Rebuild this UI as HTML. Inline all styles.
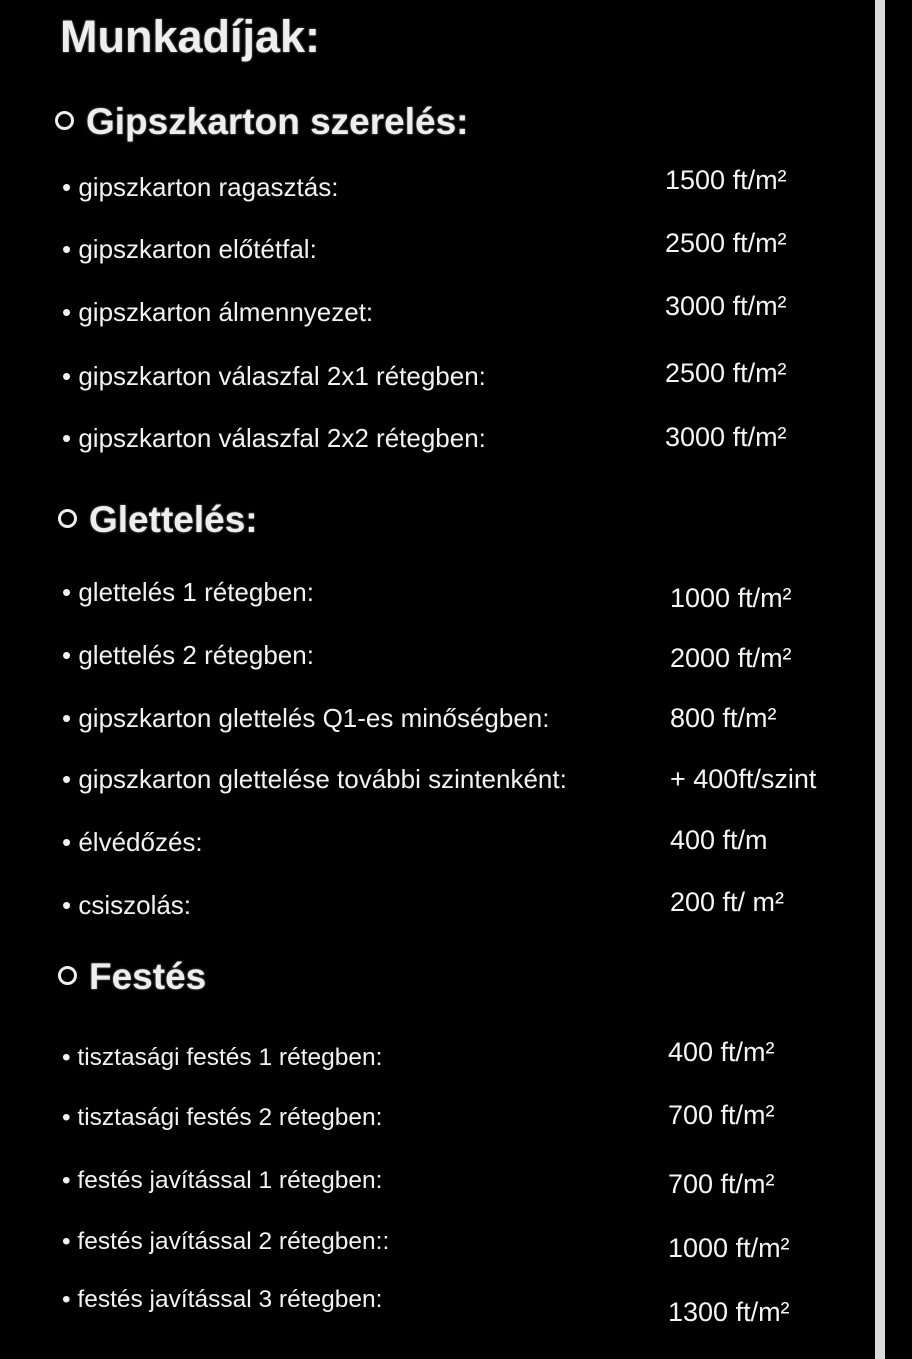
<!DOCTYPE html>
<html><head><meta charset="utf-8"><style>
body{margin:0;width:912px;height:1359px;background:#000;position:relative;overflow:hidden;font-family:"Liberation Sans",sans-serif;color:#fff}
.bar{position:absolute;left:875px;top:0;width:10px;height:1359px;background:#dcdcdc}
.t{position:absolute;white-space:nowrap;line-height:30px}
.i{font-size:26px;color:#f2f2f2;left:62px}
.p{font-size:27px;color:#f5f5f5}
.h{font-size:37px;font-weight:bold;color:#eee;line-height:44px;text-shadow:0 0 2px #888}
.h .c{display:inline-block;width:13px;height:13px;border:3px solid #eee;border-radius:50%;margin-right:12px;vertical-align:4px}
</style></head><body>
<div class="bar"></div>
<div class="t h" style="left:60px;top:15px;font-size:45px">Munkadíjak:</div>
<div class="t h" style="left:55px;top:100px"><span class="c"></span>Gipszkarton szerelés:</div>
<div class="t i" style="top:172px">• gipszkarton ragasztás:</div>
<div class="t i" style="top:234px">• gipszkarton előtétfal:</div>
<div class="t i" style="top:297px">• gipszkarton álmennyezet:</div>
<div class="t i" style="top:361px">• gipszkarton válaszfal 2x1 rétegben:</div>
<div class="t i" style="top:423px">• gipszkarton válaszfal 2x2 rétegben:</div>
<div class="t p" style="left:665px;top:165px">1500 ft/m²</div>
<div class="t p" style="left:665px;top:228px">2500 ft/m²</div>
<div class="t p" style="left:665px;top:291px">3000 ft/m²</div>
<div class="t p" style="left:665px;top:358px">2500 ft/m²</div>
<div class="t p" style="left:665px;top:422px">3000 ft/m²</div>
<div class="t h" style="left:58px;top:498px"><span class="c"></span>Glettelés:</div>
<div class="t i" style="top:577px">• glettelés 1 rétegben:</div>
<div class="t i" style="top:640px">• glettelés 2 rétegben:</div>
<div class="t i" style="top:703px">• gipszkarton glettelés  Q1-es minőségben:</div>
<div class="t i" style="top:764px">• gipszkarton glettelése további szintenként:</div>
<div class="t i" style="top:827px">• élvédőzés:</div>
<div class="t i" style="top:890px">• csiszolás:</div>
<div class="t p" style="left:670px;top:583px">1000 ft/m²</div>
<div class="t p" style="left:670px;top:643px">2000 ft/m²</div>
<div class="t p" style="left:670px;top:703px">800  ft/m²</div>
<div class="t p" style="left:670px;top:764px">+ 400ft/szint</div>
<div class="t p" style="left:670px;top:825px">400 ft/m</div>
<div class="t p" style="left:670px;top:887px">200 ft/ m²</div>
<div class="t h" style="left:58px;top:955px"><span class="c"></span>Festés</div>
<div class="t i" style="top:1043px;font-size:24.5px">• tisztasági festés 1 rétegben:</div>
<div class="t i" style="top:1103px;font-size:24.5px">• tisztasági festés 2 rétegben:</div>
<div class="t i" style="top:1166px;font-size:24.5px">• festés javítással 1 rétegben:</div>
<div class="t i" style="top:1227px;font-size:24.5px">• festés javítással 2 rétegben::</div>
<div class="t i" style="top:1285px;font-size:24.5px">• festés javítással 3 rétegben:</div>
<div class="t p" style="left:668px;top:1037px">400 ft/m²</div>
<div class="t p" style="left:668px;top:1100px">700 ft/m²</div>
<div class="t p" style="left:668px;top:1169px">700  ft/m²</div>
<div class="t p" style="left:668px;top:1233px">1000 ft/m²</div>
<div class="t p" style="left:668px;top:1297px">1300 ft/m²</div>
</body></html>
